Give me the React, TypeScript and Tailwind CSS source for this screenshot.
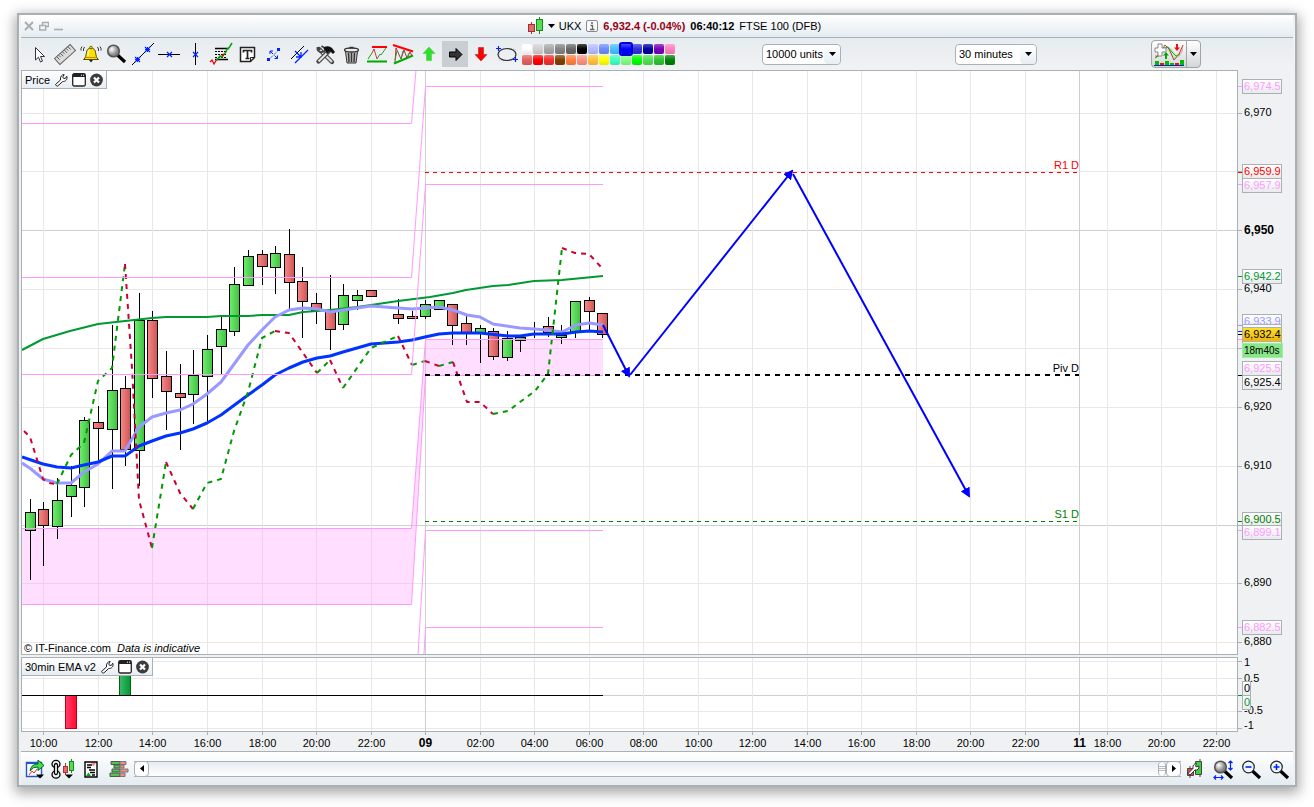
import React from "react";

type Pt = [number, number];
type Candle = [x: number, top: number, bottom: number, high: number, low: number, up: 0 | 1];

const CANDLES: Candle[] = [
  [30, 512, 530, 499, 580, 1],
  [43, 509, 525, 502, 566, 0],
  [57, 500, 526, 478, 539, 1],
  [71, 485, 496, 466, 517, 1],
  [84, 420, 487, 417, 507, 1],
  [98, 422, 428, 406, 460, 0],
  [112, 390, 429, 325, 489, 1],
  [125, 388, 449, 376, 466, 0],
  [139, 320, 450, 293, 486, 1],
  [152, 320, 378, 311, 398, 0],
  [166, 376, 391, 351, 430, 0],
  [180, 393, 397, 364, 450, 0],
  [193, 375, 394, 350, 424, 1],
  [207, 349, 376, 335, 421, 1],
  [221, 329, 346, 317, 374, 1],
  [234, 284, 331, 267, 336, 1],
  [248, 256, 285, 250, 286, 1],
  [262, 254, 266, 250, 285, 0],
  [275, 253, 267, 246, 294, 1],
  [289, 254, 282, 229, 310, 0],
  [302, 281, 301, 267, 338, 0],
  [316, 303, 310, 293, 324, 0],
  [330, 311, 329, 275, 350, 0],
  [343, 295, 324, 284, 330, 1],
  [357, 295, 300, 290, 310, 1],
  [371, 290, 296, 290, 296, 0],
  [398, 314, 318, 299, 324, 0],
  [412, 316, 318, 311, 318, 0],
  [425, 304, 316, 300, 319, 1],
  [439, 300, 309, 300, 309, 1],
  [452, 304, 325, 304, 345, 0],
  [466, 323, 333, 316, 345, 0],
  [480, 328, 332, 325, 363, 1],
  [493, 331, 356, 328, 360, 0],
  [507, 338, 357, 331, 361, 1],
  [520, 337, 340, 337, 352, 1],
  [534, 334, 334, 322, 338, 1],
  [548, 326, 332, 317, 337, 0],
  [561, 335, 337, 325, 344, 1],
  [575, 301, 332, 301, 338, 1],
  [589, 300, 311, 297, 330, 0],
  [602, 313, 334, 313, 338, 0],
];

const GREEN_MA: Pt[] = [[22, 350], [43, 339], [70, 331], [98, 324], [125, 321], [152, 318], [166, 317], [207, 317], [221, 316], [248, 316], [262, 315], [289, 315], [303, 312], [330, 310], [357, 307], [371, 305], [398, 301], [430, 297], [453, 293], [466, 290], [493, 286], [508, 285], [534, 281], [562, 280], [603, 276]];

const FAST_EMA: Pt[] = [[22, 463], [31, 469], [43, 479], [57, 483], [71, 483], [84, 472], [98, 464], [112, 451], [125, 451], [139, 427], [152, 417], [166, 413], [180, 410], [193, 404], [207, 394], [221, 382], [248, 345], [262, 330], [275, 317], [289, 310], [303, 308], [318, 309], [330, 312], [357, 308], [371, 306], [398, 308], [412, 309], [425, 308], [439, 307], [453, 310], [467, 315], [480, 317], [493, 324], [520, 328], [534, 329], [547, 330], [562, 332], [576, 325], [589, 323], [603, 325]];

const SLOW_EMA: Pt[] = [[22, 457], [31, 460], [43, 464], [57, 467], [71, 468], [84, 465], [98, 462], [112, 456], [125, 456], [139, 446], [152, 441], [166, 436], [180, 433], [193, 429], [207, 423], [221, 415], [248, 395], [262, 385], [275, 375], [289, 368], [303, 362], [317, 358], [330, 356], [343, 352], [371, 344], [398, 342], [412, 340], [425, 337], [439, 334], [453, 333], [480, 333], [508, 336], [520, 336], [534, 334], [562, 334], [576, 332], [589, 331], [603, 332]];

const SWING: { up: boolean; pts: Pt[] }[] = [
  { up: false, pts: [[24, 431], [30, 437], [43, 479], [48, 483], [57, 484]] },
  { up: true, pts: [[57, 484], [71, 455], [84, 443], [98, 381], [112, 368], [125, 264]] },
  { up: false, pts: [[125, 264], [132, 368], [135, 425], [139, 500], [152, 548]] },
  { up: true, pts: [[152, 548], [166, 462]] },
  { up: false, pts: [[166, 462], [180, 493], [193, 509]] },
  { up: true, pts: [[193, 509], [207, 483], [221, 479], [234, 431], [248, 392], [262, 338], [275, 331]] },
  { up: false, pts: [[275, 331], [289, 333], [317, 373]] },
  { up: true, pts: [[317, 373], [330, 360]] },
  { up: false, pts: [[330, 360], [343, 388]] },
  { up: true, pts: [[343, 388], [371, 348], [398, 336]] },
  { up: false, pts: [[398, 336], [412, 365]] },
  { up: true, pts: [[412, 365], [425, 361]] },
  { up: false, pts: [[425, 361], [439, 366]] },
  { up: true, pts: [[439, 366], [453, 362]] },
  { up: false, pts: [[453, 362], [467, 402], [480, 402], [493, 414]] },
  { up: true, pts: [[493, 414], [508, 411], [520, 402], [535, 391], [548, 374], [562, 248]] },
  { up: false, pts: [[562, 248], [575, 253], [589, 254], [601, 267]] },
];

const PRICE_GRID = [113, 171, 230, 289, 348, 407, 466, 525, 583, 642];
const MAJOR_PRICE = [230, 525];
const EMA_GRID = [661, 678, 695, 711, 728];
const TIMES: [number, string][] = [
  [43, "10:00"], [98, "12:00"], [152, "14:00"], [207, "16:00"], [262, "18:00"], [316, "20:00"], [371, "22:00"],
  [425, "09"], [480, "02:00"], [534, "04:00"], [589, "06:00"], [643, "08:00"], [698, "10:00"], [752, "12:00"],
  [807, "14:00"], [861, "16:00"], [916, "18:00"], [970, "20:00"], [1025, "22:00"], [1079, "11"],
  [1107, "18:00"], [1161, "20:00"], [1216, "22:00"],
];
const FAR = 4000;

const PRICE_LABELS: [number, string][] = [
  [112, "6,970"], [230, "6,950"], [288, "6,940"], [406, "6,920"], [465, "6,910"], [582, "6,890"], [641, "6,880"],
];

const TAGS: { y: number; tick: number; text: string; color: string }[] = [
  { y: 79, tick: 86, text: "6,974.5", color: "#ff99ff" },
  { y: 178, tick: 184, text: "6,957.9", color: "#ff99ff" },
  { y: 164, tick: 172, text: "6,959.9", color: "#ff0000" },
  { y: 269, tick: 276, text: "6,942.2", color: "#009933" },
  { y: 331, tick: 339, text: "", color: "#ff99ff" },
  { y: 314, tick: 325, text: "6,933.9", color: "#9999ff" },
  { y: 324, tick: 331, text: "", color: "#0033ff" },
  { y: 361, tick: 375, text: "6,925.5", color: "#ff99ff" },
  { y: 375, tick: 375, text: "6,925.4", color: "#000000" },
  { y: 512, tick: 521, text: "6,900.5", color: "#008000" },
  { y: 525, tick: 530, text: "6,899.1", color: "#ff99ff" },
  { y: 620, tick: 627, text: "6,882.5", color: "#ff99ff" },
];

const PALETTE = [
  ["White", "#ffffff"], ["Silver", "#d0d0d0"], ["Light grey", "#a8a8a8"], ["Grey", "#848484"], ["Dark grey", "#686868"], ["Black", "#000000"], ["Lavender", "#b4bcff"],
  ["Cornflower", "#6e8cff"], ["Sky", "#48c0ff"], ["Blue", "#0000ff"], ["Royal", "#3030d8"], ["Navy", "#0000a0"], ["Purple", "#7800b8"], ["Pink", "#ff80c0"],
  ["Rose", "#e06060"], ["Red", "#ff0000"], ["Crimson", "#f03030"], ["Brown", "#804000"], ["Orange", "#ff8040"], ["Salmon", "#ff9080"], ["Amber", "#ffc040"],
  ["Yellow", "#ffff00"], ["Aqua", "#40ffc0"], ["Mint", "#80ff80"], ["Lime", "#00ff00"], ["Light green", "#50e050"], ["Mid green", "#30c030"], ["Green", "#008000"],
];

const line = (pts: Pt[]) => pts.map((p) => p.join(",")).join(" ");

function Cross({ x, y }: { x: number; y: number }) {
  return <path d={`M${x - 2.5} ${y - 2.5}l5 5m0-5l-5 5`} stroke="#0022ff" strokeWidth="1.2" fill="none" />;
}

function Lens({ inner, dark }: { inner?: React.ReactNode; dark?: boolean }) {
  return (
    <>
      <path d="M13.500 14l7.500 7" stroke="#000" strokeWidth="3.2" />
      <circle cx="9.5" cy="10" r="5.8" fill={dark ? "url(#lens)" : "#eef6ff"} stroke={dark ? "#555" : "#222"} strokeWidth={dark ? "1.6" : "1.2"} />
      {inner}
    </>
  );
}

const TOOLS: { name: string; icon: React.ReactNode }[] = [
  { name: "Pointer", icon: <path d="M9.500 6.500v12.500l3-2.800 2 4.800 2-.9-2-4.600h4z" fill="#fff" stroke="#333" /> },
  {
    name: "Ruler",
    icon: (
      <g transform="rotate(-42 13 13.5)">
        <rect x="2.5" y="9.5" width="21" height="8" fill="#dcdcdc" stroke="#666" />
        <path d="M5.500 10v3.500M8 10v2.500M10.500 10v3.500M13 10v2.500M15.500 10v3.500M18 10v2.500M20.500 10v3.500" stroke="#444" strokeWidth=".8" />
      </g>
    ),
  },
  {
    name: "Alert",
    icon: (
      <g>
        <path d="M5.500 18.500c2.500-2 2.300-4 3-7a4.500 4.500 0 0 1 9 0c.7 3 .5 5 3 7z" fill="#ffe000" stroke="#5a4a00" />
        <path d="M11 9q-1 3-1 6" stroke="#fffbb0" strokeWidth="1.500" fill="none" />
        <path d="M8 16.500h10" stroke="#c09000" />
        <path d="M11 19h4l-2 2.500z" fill="#222" />
        <circle cx="13" cy="6.500" r="1.300" fill="#ffe000" stroke="#5a4a00" strokeWidth=".8" />
        <path d="M6.500 6q-1.500 2-1 4M4 5.500q-1.500 2-1 4M19.500 6q1.500 2 1 4M22 5.500q1.500 2 1 4" fill="none" stroke="#222" strokeWidth=".9" />
      </g>
    ),
  },
  { name: "Magnifier", icon: <Lens dark /> },
  { name: "Trend line", icon: <g><path d="M2 24L24 2" stroke="#000" /><Cross x={17.500} y={8.500} /><Cross x={7.500} y={18.500} /><path d="M15 8.500h5M17.500 6v5M5 18.500h5M7.500 16v5" stroke="#02f" /></g> },
  { name: "Horizontal line", icon: <g><path d="M2 13.500h22" stroke="#000" /><Cross x={13.500} y={13.500} /></g> },
  { name: "Vertical line", icon: <g><path d="M13.500 2v22" stroke="#000" /><Cross x={13.500} y={13.500} /></g> },
  {
    name: "Fibonacci",
    icon: (
      <g fill="none">
        <path d="M7 7.500h14M7 18.500h13" stroke="#000" strokeWidth="1.400" />
        <path d="M7 10.500h12M7 13.500h12M7 16.500h12" stroke="#000" strokeDasharray="2 1" />
        <path d="M2 21l2-2 2 4 3-5" stroke="#e00" strokeWidth="1.300" />
        <path d="M9 19l3-4 2 1 4-5 1-3 2-1 3-5" stroke="#0a0" strokeWidth="1.500" />
        <path d="M14 15l2-2" stroke="#e00" strokeWidth="1.600" />
      </g>
    ),
  },
  {
    name: "Text",
    icon: (
      <g fill="none" stroke="#222">
        <path d="M6.500 6.500h14v10l-4 4h-10z" fill="#fff" strokeWidth="1.500" />
        <path d="M20 16.500h-3.500v4" />
        <path d="M9.500 11.500v-2h8v2M13.500 9.500v8M11.500 17.500h4" strokeWidth="1.700" />
      </g>
    ),
  },
  {
    name: "Segment",
    icon: (
      <g>
        <path d="M9 18.500l9.500-9.500" stroke="#02f" strokeDasharray="1 1" />
        <path d="M10 10l3 3M10 10h3M10 10v3M17.500 17.500l-3-3M17.500 17.500h-3M17.500 17.500v-3" stroke="#02f" fill="none" />
        <rect x="7" y="17" width="3" height="3" fill="#02f" /><rect x="17" y="7" width="3" height="3" fill="#02f" />
      </g>
    ),
  },
  {
    name: "Parallel lines",
    icon: (
      <g fill="none">
        <path d="M5 18L18 5" stroke="#000" /><path d="M9 22L22 9" stroke="#02f" strokeWidth="1.300" />
        <path d="M9 10l6 6m0-5v5h-5" stroke="#02f" strokeWidth="1.300" />
      </g>
    ),
  },
  {
    name: "Settings",
    icon: (
      <g fill="none">
        <path d="M7 8l13 13" stroke="#444" strokeWidth="4.400" strokeLinecap="round" /><path d="M8 9l12 12" stroke="#ddd" strokeWidth="2.400" />
        <path d="M5.500 6q-.5 5 4 5t3-4l-3-2" stroke="#444" strokeWidth="1.800" />
        <path d="M6.500 20.500L17 10" stroke="#444" strokeWidth="4.400" strokeLinecap="round" /><path d="M6.500 20.500l8-8" stroke="#e4e4e4" strokeWidth="2.200" />
        <path d="M12 6q5-2 8 1l3 4-2 2-3-3-3 2-3-4z" fill="#111" />
      </g>
    ),
  },
  {
    name: "Delete",
    icon: (
      <g fill="none" stroke="#333">
        <path d="M7.500 10.500h12l-1.500 11.500h-9z" fill="#bbb" />
        <ellipse cx="13.500" cy="9" rx="7" ry="2" fill="#eee" strokeWidth="1.300" />
        <path d="M11.500 6.500h4M10.500 12l.5 9M13.500 12v9M16.500 12l-.5 9" strokeWidth="1.400" />
      </g>
    ),
  },
  {
    name: "Range pattern",
    icon: (
      <g fill="none">
        <path d="M8 6h15" stroke="#f00" strokeWidth="2" /><path d="M3 20.500h20" stroke="#0a0" strokeWidth="2" />
        <path d="M4 18l4-6" stroke="#0a0" /><path d="M8 12l2-4 3 10" stroke="#c33" /><path d="M13 18l3-5 1 1 5-7" stroke="#393" />
      </g>
    ),
  },
  {
    name: "Triangle pattern",
    icon: (
      <g fill="none">
        <path d="M3 4l20 6.500" stroke="#f00" strokeWidth="2" /><path d="M4 22.500l19-8" stroke="#0a0" strokeWidth="2" />
        <path d="M5 21l1-14 5 11 3-9 3 8 3-6 2 4" stroke="#a33" /><path d="M5 19l2-9M11 18l2-8M17 17l2-5" stroke="#393" />
      </g>
    ),
  },
  { name: "Arrow up", icon: <path d="M13 6l6 6.500h-3.500v7h-5v-7h-3.500z" fill="#2be02b" stroke="#58c858" strokeWidth=".6" /> },
  { name: "Arrow right", icon: <path d="M7.500 11h6.500v-3.500l6 6-6 6v-3.500h-6.500z" fill="#333" stroke="#000" /> },
  { name: "Arrow down", icon: <path d="M13 20l-6-6.500h3.500v-7h5v7h3.500z" fill="#f00" stroke="#b22" strokeWidth=".6" /> },
  {
    name: "Ellipse",
    icon: (
      <g fill="none">
        <rect x="5" y="8" width="16" height="11" stroke="#b8bcd0" strokeDasharray="1 1" />
        <ellipse cx="13" cy="13.500" rx="9" ry="6" stroke="#333" strokeWidth="1.200" />
        <path d="M4.500 5v5M2 7.500h5M21.500 16v5M19 18.500h5" stroke="#02f" strokeWidth="1.200" />
      </g>
    ),
  },
];

function PanelHeader({ title }: { title: string }) {
  return (
    <div className="absolute left-0 top-0 flex h-[18px] items-center gap-1 border-b border-r border-[#a9b0b6] bg-gradient-to-b from-white to-[#e6edf2] px-[3px] text-black">
      <span>{title}</span>
      <button aria-label={`Configure ${title}`}>
        <svg width="14" height="14" viewBox="0 0 14 14" className="block">
          <path d="M1.500 11.500l5-4.500c-.6-3 1.200-5.500 3.700-5.500l-1.500 2.500 1 1.500 2-.3 1-2c1.300 3-1.200 5.600-4 5.300l-5 4.500q-1.600.3-2.200-1.500z" fill="#fff" stroke="#222" />
        </svg>
      </button>
      <button aria-label={`Maximise ${title}`}>
        <svg width="14" height="14" viewBox="0 0 14 14" className="block">
          <rect x=".7" y=".7" width="12.600" height="12.300" rx="1.500" fill="#fff" stroke="#222" strokeWidth="1.300" />
          <path d="M1 1h12v3H1z" fill="#222" />
          <path d="M9 2.200h1M11 2.200h1" stroke="#fff" />
        </svg>
      </button>
      <button aria-label={`Close ${title}`}>
        <svg width="13" height="14" viewBox="0 0 13 14" className="block">
          <circle cx="6.500" cy="7" r="6.400" fill="#3c3c3c" />
          <path d="M4 4.500l5 5m0-5l-5 5" stroke="#fff" strokeWidth="2.200" />
        </svg>
      </button>
    </div>
  );
}

function Verticals({ y1, y2 }: { y1: number; y2: number }) {
  return (
    <g strokeWidth="1">
      {TIMES.map(([x, t]) => (
        <line key={x} x1={x + 0.5} x2={x + 0.5} y1={y1} y2={y2} stroke={t.length === 2 ? "#cfcfcf" : "#e8e8e8"} />
      ))}
    </g>
  );
}

function PriceChart() {
  return (
    <svg className="block h-[583px] w-full" role="img" aria-label="UKX 30 minute candlestick chart">
      <defs>
        <linearGradient id="upFill"><stop offset="0" stopColor="#70ee70" /><stop offset="1" stopColor="#40c040" /></linearGradient>
        <linearGradient id="downFill"><stop offset="0" stopColor="#f98888" /><stop offset="1" stopColor="#cc5555" /></linearGradient>
        <marker id="head" viewBox="0 0 10 10" refX="8" refY="5" markerWidth="10" markerHeight="10" markerUnits="userSpaceOnUse" orient="auto">
          <path d="M0 0L10 5L0 10z" fill="#0000ff" />
        </marker>
      </defs>
      <g transform="translate(-22 -71)">
        {PRICE_GRID.map((y) => (
          <line key={y} x1="22" x2={FAR} y1={y + 0.5} y2={y + 0.5} stroke={MAJOR_PRICE.includes(y) ? "#cfcfcf" : "#e8e8e8"} />
        ))}
        <Verticals y1={70} y2={654} />
        <path d="M22 528.500H411.500L425.500 339.500H603V375.500H425.500L411.500 604.500H22z" fill="#ff99ff" fillOpacity=".32" />
        {CANDLES.map(([x, t, b, h, l, up]) => (
          <g key={x} stroke="#000">
            <line x1={x + 0.5} x2={x + 0.5} y1={h} y2={l} />
            {t === b ? (
              <line x1={x - 5} x2={x + 6} y1={t + 0.5} y2={t + 0.5} />
            ) : (
              <rect x={x - 4.5} y={t + 0.5} width="10" height={b - t} fill={up ? "url(#upFill)" : "url(#downFill)"} />
            )}
          </g>
        ))}
        <g fill="none" strokeLinejoin="round">
          <polyline points={line(GREEN_MA)} stroke="#009933" strokeWidth="2" />
          <polyline points={line(FAST_EMA)} stroke="#9999ff" strokeWidth="3" />
          <polyline points={line(SLOW_EMA)} stroke="#0033ff" strokeWidth="3" />
          {SWING.map((s, i) => (
            <polyline key={i} points={line(s.pts)} stroke={s.up ? "#009900" : "#cc0033"} strokeWidth="2" strokeDasharray="5 5" />
          ))}
        </g>
        <g fill="none" stroke="#ff99ff">
          <path d="M22 123.500H411.500L416 70" />
          <path d="M22 277.500H411.500L425.500 86.500H603" />
          <path d="M22 374.500H411.500L425.500 184.500H603" />
          <path d="M22 528.500H411.500L425.500 339.500H603" />
          <path d="M22 604.500H411.500L425.500 375.500H603" />
          <path d="M418 654L425.500 530.500H603" />
          <path d="M424 654L425.500 627.500H603" />
        </g>
        <path d="M425 172.500H1079" stroke="#ff0000" strokeDasharray="4 4" />
        <path d="M425 375H1079" stroke="#000" strokeWidth="2" strokeDasharray="5 5" />
        <path d="M425 521.500H1079" stroke="#008000" strokeDasharray="4 4" />
        <g stroke="#0000ff" strokeWidth="2" fill="none">
          <path d="M603 325L629 376" markerEnd="url(#head)" />
          <path d="M630 375L792 171" markerEnd="url(#head)" />
          <path d="M793 174L969 496" markerEnd="url(#head)" />
        </g>
        <g fontSize="11" textAnchor="end">
          <text x="1079" y="169" fill="#ff0000">R1 D</text>
          <text x="1079" y="372" fill="#000">Piv D</text>
          <text x="1079" y="518" fill="#008000">S1 D</text>
        </g>
        <text x="24" y="652" fontSize="11" fill="#000">
          © IT-Finance.com <tspan x="117" fontStyle="italic">Data is indicative</tspan>
        </text>
      </g>
    </svg>
  );
}

function EmaChart() {
  return (
    <svg className="block h-[73px] w-full" role="img" aria-label="30min EMA v2 histogram">
      <defs>
        <linearGradient id="barDown"><stop offset="0" stopColor="#ff3e6c" /><stop offset="1" stopColor="#ff0a2c" /></linearGradient>
        <linearGradient id="barUp"><stop offset="0" stopColor="#40b870" /><stop offset="1" stopColor="#009933" /></linearGradient>
      </defs>
      <g transform="translate(-22 -658)">
        {EMA_GRID.map((y) => (
          <line key={y} x1="22" x2={FAR} y1={y + 0.5} y2={y + 0.5} stroke={y === 695 ? "#cfcfcf" : "#e8e8e8"} />
        ))}
        <Verticals y1={657} y2={731} />
        <rect x="65.500" y="695.500" width="11" height="33" fill="url(#barDown)" stroke="#c00010" />
        <rect x="119.500" y="670.500" width="11" height="25" fill="url(#barUp)" stroke="#006600" />
        <path d="M22 695.500H603" stroke="#000" />
      </g>
    </svg>
  );
}

function Tag({ y, text, color, width = 39 }: { y: number; text: string; color: string; width?: number }) {
  return (
    <g>
      <rect x="1242.500" y={y + 0.5} width={width} height="14" fill="url(#tagFill)" stroke="#a9b0b6" />
      {text && <text x="1244" y={y + 11} fill={color}>{text}</text>}
    </g>
  );
}

function PriceAxis() {
  return (
    <svg className="block h-[662px] w-[55px] shrink-0" fontSize="11" role="img" aria-label="Price axis">
      <defs>
        <linearGradient id="tagFill" x2="0" y2="1"><stop offset="0" stopColor="#fff" /><stop offset="1" stopColor="#e8eaec" /></linearGradient>
        <linearGradient id="lastFill" x2="0" y2="1"><stop offset="0" stopColor="#ffe033" /><stop offset="1" stopColor="#f0b400" /></linearGradient>
      </defs>
      <g transform="translate(-1238 -70)">
        {[...PRICE_GRID, ...EMA_GRID].map((y) => (
          <line key={y} x1="1238" x2="1242" y1={y + 0.5} y2={y + 0.5} stroke="#a9b0b6" />
        ))}
        {PRICE_LABELS.map(([y, t]) => (
          <text key={t} x="1244" y={y + 4} fontSize={t === "6,950" ? 12 : 11} fontWeight={t === "6,950" ? 700 : 400}>{t}</text>
        ))}
        {TAGS.map((t) => (
          <g key={t.y}>
            <line x1="1238" x2="1242" y1={t.tick + 0.5} y2={t.tick + 0.5} stroke={t.color} />
            <Tag y={t.y} text={t.text} color={t.color} />
          </g>
        ))}
        <line x1="1238" x2="1242" y1="334.500" y2="334.500" stroke="#000" />
        <rect x="1242.500" y="327.500" width="39" height="14" fill="url(#lastFill)" stroke="#a9b0b6" />
        <text x="1244" y="338">6,932.4</text>
        <rect x="1242.500" y="343.500" width="40" height="14" fill="#88e688" stroke="#9cf09c" />
        <text x="1244" y="354" fontSize="10">18m40s</text>
        <text x="1244" y="666">1</text>
        <text x="1244" y="682">0.5</text>
        <text x="1244" y="714">-0.5</text>
        <text x="1244" y="729">-1</text>
        <line x1="1238" x2="1242" y1="695.500" y2="695.500" stroke="#009933" />
        <Tag y={681} text="0" color="#000" width={8} />
        <Tag y={695} text="0" color="#009933" width={8} />
      </g>
    </svg>
  );
}

function TimeAxis() {
  return (
    <svg className="block h-[19px] w-full" textAnchor="middle" role="img" aria-label="Time axis">
      <g transform="translate(-21 -732)">
        {TIMES.map(([x, t]) => (
          <g key={x}>
            <line x1={x + 0.5} x2={x + 0.5} y1="732" y2="735" stroke="#a9b0b6" />
            <text x={x + 0.5} y="747" fontSize={t.length === 2 ? 12 : 11} fontWeight={t.length === 2 ? 700 : 400}>{t}</text>
          </g>
        ))}
      </g>
    </svg>
  );
}

function Dropdown({ label, value, width }: { label: string; value: string; width: string }) {
  return (
    <div className={`relative h-[21px] ${width}`}>
      <select
        aria-label={label}
        defaultValue={value}
        className="h-full w-full appearance-none rounded border border-[#a9b0b6] bg-white pl-[3px] pr-4 text-[11px] leading-4 text-black"
      >
        <option>{value}</option>
      </select>
      <span className="pointer-events-none absolute inset-y-px right-px flex w-4 items-center justify-center rounded bg-gradient-to-b from-white to-[#e6eef3]">
        <svg width="7" height="4"><path d="M0 0h7L3.500 4z" /></svg>
      </span>
    </div>
  );
}

function FootButton({ name, children }: { name: string; children: React.ReactNode }) {
  return (
    <button aria-label={name} className="flex h-6 w-7 shrink-0 items-center justify-center">
      <svg width="24" height="24" viewBox="0 0 24 24" className="block">{children}</svg>
    </button>
  );
}

export default function App() {
  return (
    <div className="bg-white px-[17px] pb-5 pt-[13px] font-['Liberation_Sans',Arial,sans-serif] text-[11px] leading-[14px] text-black">
      <main className="border-2 border-[#a9b0b4] bg-[#eff1f3] px-[2px] shadow-[0_4px_12px_2px_rgba(0,0,0,0.35)]">
        <header className="flex h-[23px] items-center border-b border-[#a9b0b6] bg-gradient-to-b from-white to-[#e4ecf1]">
          <div className="flex w-10 items-center gap-[5px] pl-[3px]">
            <button aria-label="Close window"><svg width="10" height="10" className="block"><path d="M1 1l8 8m0-8L1 9" stroke="#a9adb0" strokeWidth="2" /></svg></button>
            <button aria-label="Restore window"><svg width="10" height="10" className="block" fill="none" stroke="#a9adb0"><path d="M3 1.500h6.500v4H7M3.500 1v3" strokeWidth="1.400" /><path d="M.7 4.500h6v4.500h-6z" strokeWidth="1.400" /></svg></button>
            <button aria-label="Minimise window"><svg width="10" height="10" className="block"><path d="M0 8.500h9" stroke="#a9adb0" strokeWidth="1.600" /></svg></button>
          </div>
          <h1 className="flex flex-1 items-center justify-center pr-[6px] font-normal">
            <svg width="17" height="18" className="block">
              <path d="M4.500 5v12" stroke="#a33" /><rect x="1.500" y="7.500" width="6" height="7" fill="#e06b6b" stroke="#a33030" />
              <path d="M12.500 0v17" stroke="#1a8a1a" /><rect x="9.500" y="2.500" width="6" height="11" fill="#58dc58" stroke="#1a8a1a" />
            </svg>
            <svg width="7" height="4" className="ml-1 mr-1 block"><path d="M0 0h7L3.500 4z" /></svg>
            <span>UKX</span>
            <svg width="12" height="12" className="ml-[5px] mr-[5px] block">
              <rect x=".5" y=".5" width="11" height="11" rx="1.500" fill="#fafafa" stroke="#888" />
              <path d="M5 3h2M4.500 5.500h2v3.500M4 9.500h4.500" stroke="#666" strokeWidth="1.300" fill="none" />
            </svg>
            <strong className="text-[#990011]">6,932.4 (-0.04%)</strong>
            <strong className="ml-[5px]">06:40:12</strong>
            <span className="ml-[5px]">FTSE 100 (DFB)</span>
          </h1>
        </header>

        <div className="flex h-8 items-center bg-gradient-to-b from-[#e6ecf0] to-[#f1f2f3] pl-[5px]">
          <svg width="0" height="0" className="absolute">
            <defs><radialGradient id="lens" cx=".35" cy=".35"><stop offset="0" stopColor="#fff" /><stop offset="1" stopColor="#888" /></radialGradient></defs>
          </svg>
          <div className="flex" role="toolbar" aria-label="Drawing tools">
            {TOOLS.map((t) => (
              <button key={t.name} aria-label={t.name} className={t.name === "Arrow right" ? "h-[26px] w-[26px] bg-[#c9ced3]" : "h-[26px] w-[26px]"}>
                <svg width="26" height="26" viewBox="0 0 26 26" className="block">{t.icon}</svg>
              </button>
            ))}
          </div>
          <div className="ml-[2px] grid grid-cols-14 gap-px">
            {PALETTE.map(([name, c]) => (
              <button key={name} aria-label={name} className={name === "Blue" ? "relative h-[10px] w-[10px] rounded-[1px] outline-2 outline-[#0000e0]" : "h-[10px] w-[10px] rounded-[2px]"} style={{ backgroundColor: c }}>
                <span className="block h-[10px] w-full rounded-[2px] bg-gradient-to-b from-white/30 via-transparent to-black/10" />
              </button>
            ))}
          </div>
          <div className="flex flex-1 items-center justify-between pl-[87px] pr-[92px]">
            <Dropdown label="Units" value="10000 units" width="w-[79px]" />
            <Dropdown label="Timeframe" value="30 minutes" width="w-[82px]" />
            <div className="flex h-7 w-[50px] overflow-hidden rounded border border-[#a0a4a8] bg-gradient-to-b from-white to-[#d4d6d8]">
              <button aria-label="Add indicator" className="w-[35px] border-r border-[#a0a4a8] pl-[2px]">
                <svg width="31" height="26" className="block" fill="none">
                  <path d="M1 17L1 14 6 13 11 4 8 12 5 15zM20 18L26 13 29 4V10L26 15z" fill="#f7b3b3" />
                  <path d="M9 9l4-4 5 3 5 7 2 1-5 3-6-9z" fill="#c4ecc4" />
                  <path d="M1 17l4-4 6-9 4 4 5 11 5-6 4-9" stroke="#c33" /><path d="M1 17l5-3 4-7 4-1 4 5 4 4 4-2" stroke="#2a2" />
                  <path d="M4 3h4v4h4v4H8v4H4v-4H1V7h3z" fill="#fff" stroke="#888" />
                  <path d="M12 11l3 3.500h-2V18h-2v-3.500H9z" fill="#0a0" /><path d="M23 10l-3-3.500h2V3h2v3.500h2z" fill="#e11" />
                  <path d="M1 20h4v4H1zM11 20h4v4h-4zM16 22h4v2h-4zM26 19h4v5h-4z" fill="#0b0" /><path d="M6 22h4v2H6zM21 22h4v2h-4z" fill="#e11" />
                  <path d="M0 24.500h30" stroke="#02c" />
                </svg>
              </button>
              <button aria-label="Indicator menu" className="flex flex-1 items-center justify-center"><svg width="7" height="4"><path d="M0 0h7L3.500 4z" /></svg></button>
            </div>
          </div>
        </div>

        <div className="flex">
          <div className="flex min-w-0 flex-1 flex-col gap-[2px]">
            <section className="relative border border-[#a9b0b6] bg-white">
              <PriceChart />
              <PanelHeader title="Price" />
            </section>
            <section className="relative border border-[#a9b0b6] bg-white">
              <EmaChart />
              <PanelHeader title="30min EMA v2" />
            </section>
          </div>
          <PriceAxis />
        </div>
        <TimeAxis />

        <footer className="flex h-[34px] items-center border-t border-[#a9b0b6] bg-gradient-to-b from-white to-[#e4ecf1]">
          <FootButton name="Share chart">
            <path d="M3.500 5.500h15v14h-15z" fill="#fff" stroke="#2456c8" strokeWidth="1.400" /><path d="M3 6h16" stroke="#2456c8" strokeWidth="2" />
            <path d="M6 18l3-4 2 2 3-4" stroke="#e22" fill="none" />
            <path d="M7 14q1-7 8-7V3l6 5.500-6 5V10q-5-.5-8 4z" fill="#4d4" stroke="#063" /><path d="M13 17.500h8l-4 4z" />
          </FootButton>
          <FootButton name="Link charts">
            <g fill="none" stroke="#000" strokeWidth="1.300"><ellipse cx="5" cy="7" rx="4" ry="3.700" /><ellipse cx="5" cy="17.500" rx="4" ry="3.700" /><rect x="3.500" y="6.500" width="3" height="11" rx="1.500" fill="#fff" /></g>
            <path d="M14.500 6v12" stroke="#a33" /><rect x="12.500" y="9.500" width="4" height="6" fill="#e66" stroke="#a33" />
            <path d="M20.500 2v14" stroke="#1a8a1a" /><rect x="18.500" y="4.500" width="4" height="9" fill="#5d5" stroke="#1a8a1a" />
            <path d="M14 17.500h8l-4 4z" />
          </FootButton>
          <FootButton name="Reports">
            <path d="M6 5h12v15H6z" fill="#fff" stroke="#000" strokeWidth="1.400" />
            <path d="M8 8h5M8 10.500h4M10 13h6M11 15.500h5M13 18h3" stroke="#000" strokeWidth="1.300" /><path d="M12 6h5l-2.500 3.500z" fill="#f88" /><path d="M7 19h5l-2.500-3.500z" fill="#0a0" />
          </FootButton>
          <FootButton name="Order book">
            <path d="M4 4.500h9v3H4zM7 8h6v3H7zM5 12h8v3H5zM3 16h10v3.500H3z" fill="#4cc84c" stroke="#555" /><path d="M13 4.500h6v3h-6zM13 8h4v3h-4zM13 12h8v3h-8zM13 16h5v3.500h-5z" fill="#f58a8a" stroke="#777" />
          </FootButton>
          <div className="ml-px flex h-4 min-w-0 flex-1 items-stretch border-y border-[#a9b0b6] bg-gradient-to-b from-[#e4ecf1] to-white">
            <button aria-label="Scroll left" className="-my-px flex w-[15px] items-center justify-center rounded border border-[#a9b0b6] bg-white"><svg width="4" height="7"><path d="M4 0v7L0 3.500z" /></svg></button>
            <div className="flex-1" />
            <div className="flex w-2 flex-col justify-center gap-px rounded border-x border-[#a9b0b6] bg-white">
              <span className="h-px bg-[#bbb]" /><span className="h-px bg-[#bbb]" /><span className="h-px bg-[#bbb]" />
            </div>
            <button aria-label="Scroll right" className="-my-px flex w-[15px] items-center justify-center rounded border border-[#a9b0b6] bg-white"><svg width="4" height="7"><path d="M0 0v7l4-3.500z" /></svg></button>
          </div>
          <FootButton name="Chart settings">
            <path d="M7 9v12M17 2v18" stroke="#444" /><path d="M4.500 11.500h6v7h-6z" fill="#e44" stroke="#444" /><path d="M12.500 4.500h6v13h-6z" fill="#4c4" stroke="#444" />
            <path d="M5 16.500l5-5c-.5-3 1-5 3.500-5l-1 2.500 1 1 2.500-1c.3 3-1.500 4.500-4 4l-5 5z" fill="#fff" stroke="#333" />
          </FootButton>
          <FootButton name="Fit zoom">
            <Lens dark /><path d="M19.500 4v9M17.500 6l2-2 2 2M17.500 11l2 2 2-2M3 20.500h9M5 18.500l-2 2 2 2M10 18.500l2 2-2 2" stroke="#02f" fill="none" strokeWidth="1.200" />
          </FootButton>
          <FootButton name="Zoom out"><Lens inner={<path d="M6.500 10h6" stroke="#02f" strokeWidth="1.600" />} /></FootButton>
          <FootButton name="Zoom in"><Lens inner={<path d="M6.500 10h6M9.500 7v6" stroke="#02f" strokeWidth="1.600" />} /></FootButton>
        </footer>
      </main>
    </div>
  );
}
